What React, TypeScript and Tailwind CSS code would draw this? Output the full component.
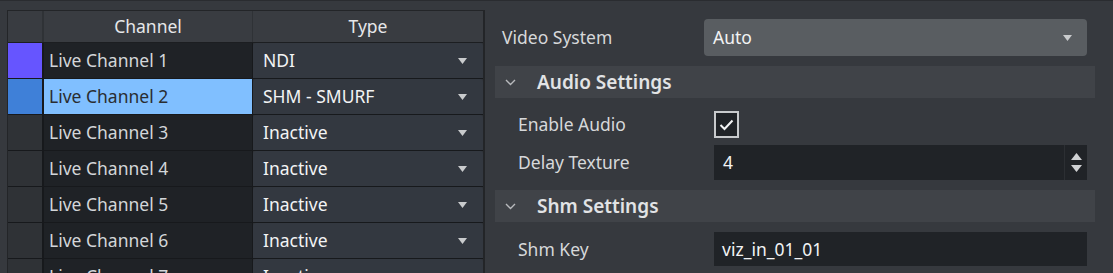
import React from 'react';

type Row = { name: string; type: string; swatch?: string; selected?: boolean };

const ROWS: Row[] = [
  { name: 'Live Channel 1', type: 'NDI', swatch: 'bg-[#6655ff]' },
  { name: 'Live Channel 2', type: 'SHM - SMURF', swatch: 'bg-[#3f80d8]', selected: true },
  { name: 'Live Channel 3', type: 'Inactive' },
  { name: 'Live Channel 4', type: 'Inactive' },
  { name: 'Live Channel 5', type: 'Inactive' },
  { name: 'Live Channel 6', type: 'Inactive' },
  { name: 'Live Channel 7', type: 'Inactive' },
];

const font = { fontFamily: '"Noto Sans", "Open Sans", sans-serif' };

function Caret() {
  return (
    <svg width="9" height="6" viewBox="0 0 9 6" className="shrink-0">
      <path d="M0 0 L9 0 L4.5 6 Z" fill="#c9cbcd" />
    </svg>
  );
}

function Chevron() {
  return (
    <svg width="11" height="7" viewBox="0 0 11 7" className="shrink-0">
      <path d="M1 1 L5.5 5.5 L10 1" fill="none" stroke="#b8babd" strokeWidth="1.4" />
    </svg>
  );
}

function SectionHeader({ title }: { title: string }) {
  return (
    <div className="flex items-center h-[32px] bg-[#404348] pl-[10px]">
      <Chevron />
      <span className="ml-[21px] text-[19px] font-semibold text-[#e2e3e5]">{title}</span>
    </div>
  );
}

export default function App() {
  return (
    <div className="flex h-[273px] w-[1113px] overflow-hidden bg-[#36393e] border-t border-[#2a2c30] text-[17.5px]" style={font}>
      {/* Channel table */}
      <div className="ml-[7px] mt-[9px] w-[478px] shrink-0 self-start border-l border-t border-r-2 border-[#232528] bg-[#2f3236]">
        <div className="flex h-[32px] border-b border-[#1c1e21] bg-[#393c41] text-[#e6e7e9]">
          <div className="w-[36px] border-r-2 border-[#2f3236]" />
          <div className="w-[209px] border-r border-[#2f3236] flex items-center justify-center">Channel</div>
          <div className="w-[230px] flex items-center justify-center">Type</div>
        </div>
        {ROWS.map((r) => (
          <div key={r.name} className="flex h-[36px] border-b border-[#17191c]">
            <div className={`w-[36px] border-r-2 border-[#17191c] ${r.swatch ?? 'bg-[#2f3236]'}`} />
            <div
              className={`w-[209px] border-r border-[#17191c] flex items-center pl-[5px] ${
                r.selected ? 'bg-[#80bfff] text-[#2a2d31]' : 'bg-[#1f2226] text-[#d3d6d9]'
              }`}
            >
              {r.name}
            </div>
            <div className="w-[230px] flex items-center justify-between pl-[10px] pr-[16px] rounded-t-[3px] bg-[#333840] text-[#f2f3f4]">
              <span>{r.type}</span>
              <Caret />
            </div>
          </div>
        ))}
      </div>

      {/* Settings panel */}
      <div className="ml-[10px] w-[600px] shrink-0 pt-[18px] text-[#d6d8da]">
        <div className="flex items-center h-[37px]">
          <div className="w-[209px] pl-[7px]">Video System</div>
          <div className="flex items-center justify-between w-[383px] h-[37px] rounded-[4px] bg-[#595d61] pl-[9px] pr-[15px] text-[#f2f3f4]">
            <span>Auto</span>
            <Caret />
          </div>
        </div>

        <div className="mt-[10px]">
          <SectionHeader title="Audio Settings" />
        </div>

        <div className="flex items-center h-[27px] mt-[13px]">
          <div className="w-[219px] pl-[23px]">Enable Audio</div>
          <div className="flex items-center justify-center w-[25px] h-[27px] border-2 border-[#c8cacc] bg-[#202327]">
            <svg width="15" height="12" viewBox="0 0 15 12">
              <path d="M1.5 6 L5.5 10 L13.5 1.5" fill="none" stroke="#f2f3f4" strokeWidth="2" />
            </svg>
          </div>
        </div>

        <div className="flex items-center h-[35px] mt-[7px]">
          <div className="w-[219px] pl-[23px]">Delay Texture</div>
          <div className="flex items-center w-[373px] h-[35px] bg-[#202327] text-[#f2f3f4]">
            <span className="flex-1 pl-[9px]">4</span>
            <div className="flex flex-col items-center justify-center gap-[5px] w-[23px] h-full border-l border-[#2c2f33]">
              <svg width="11" height="7" viewBox="0 0 11 7">
                <path d="M0 7 L11 7 L5.5 0 Z" fill="#d0d2d4" />
              </svg>
              <svg width="11" height="7" viewBox="0 0 11 7">
                <path d="M0 0 L11 0 L5.5 7 Z" fill="#d0d2d4" />
              </svg>
            </div>
          </div>
        </div>

        <div className="mt-[10px]">
          <SectionHeader title="Shm Settings" />
        </div>

        <div className="flex items-center h-[34px] mt-[10px]">
          <div className="w-[219px] pl-[23px]">Shm Key</div>
          <div className="flex items-center w-[373px] h-[34px] bg-[#202327] pl-[8px] text-[#f2f3f4]">viz_in_01_01</div>
        </div>
      </div>
    </div>
  );
}
